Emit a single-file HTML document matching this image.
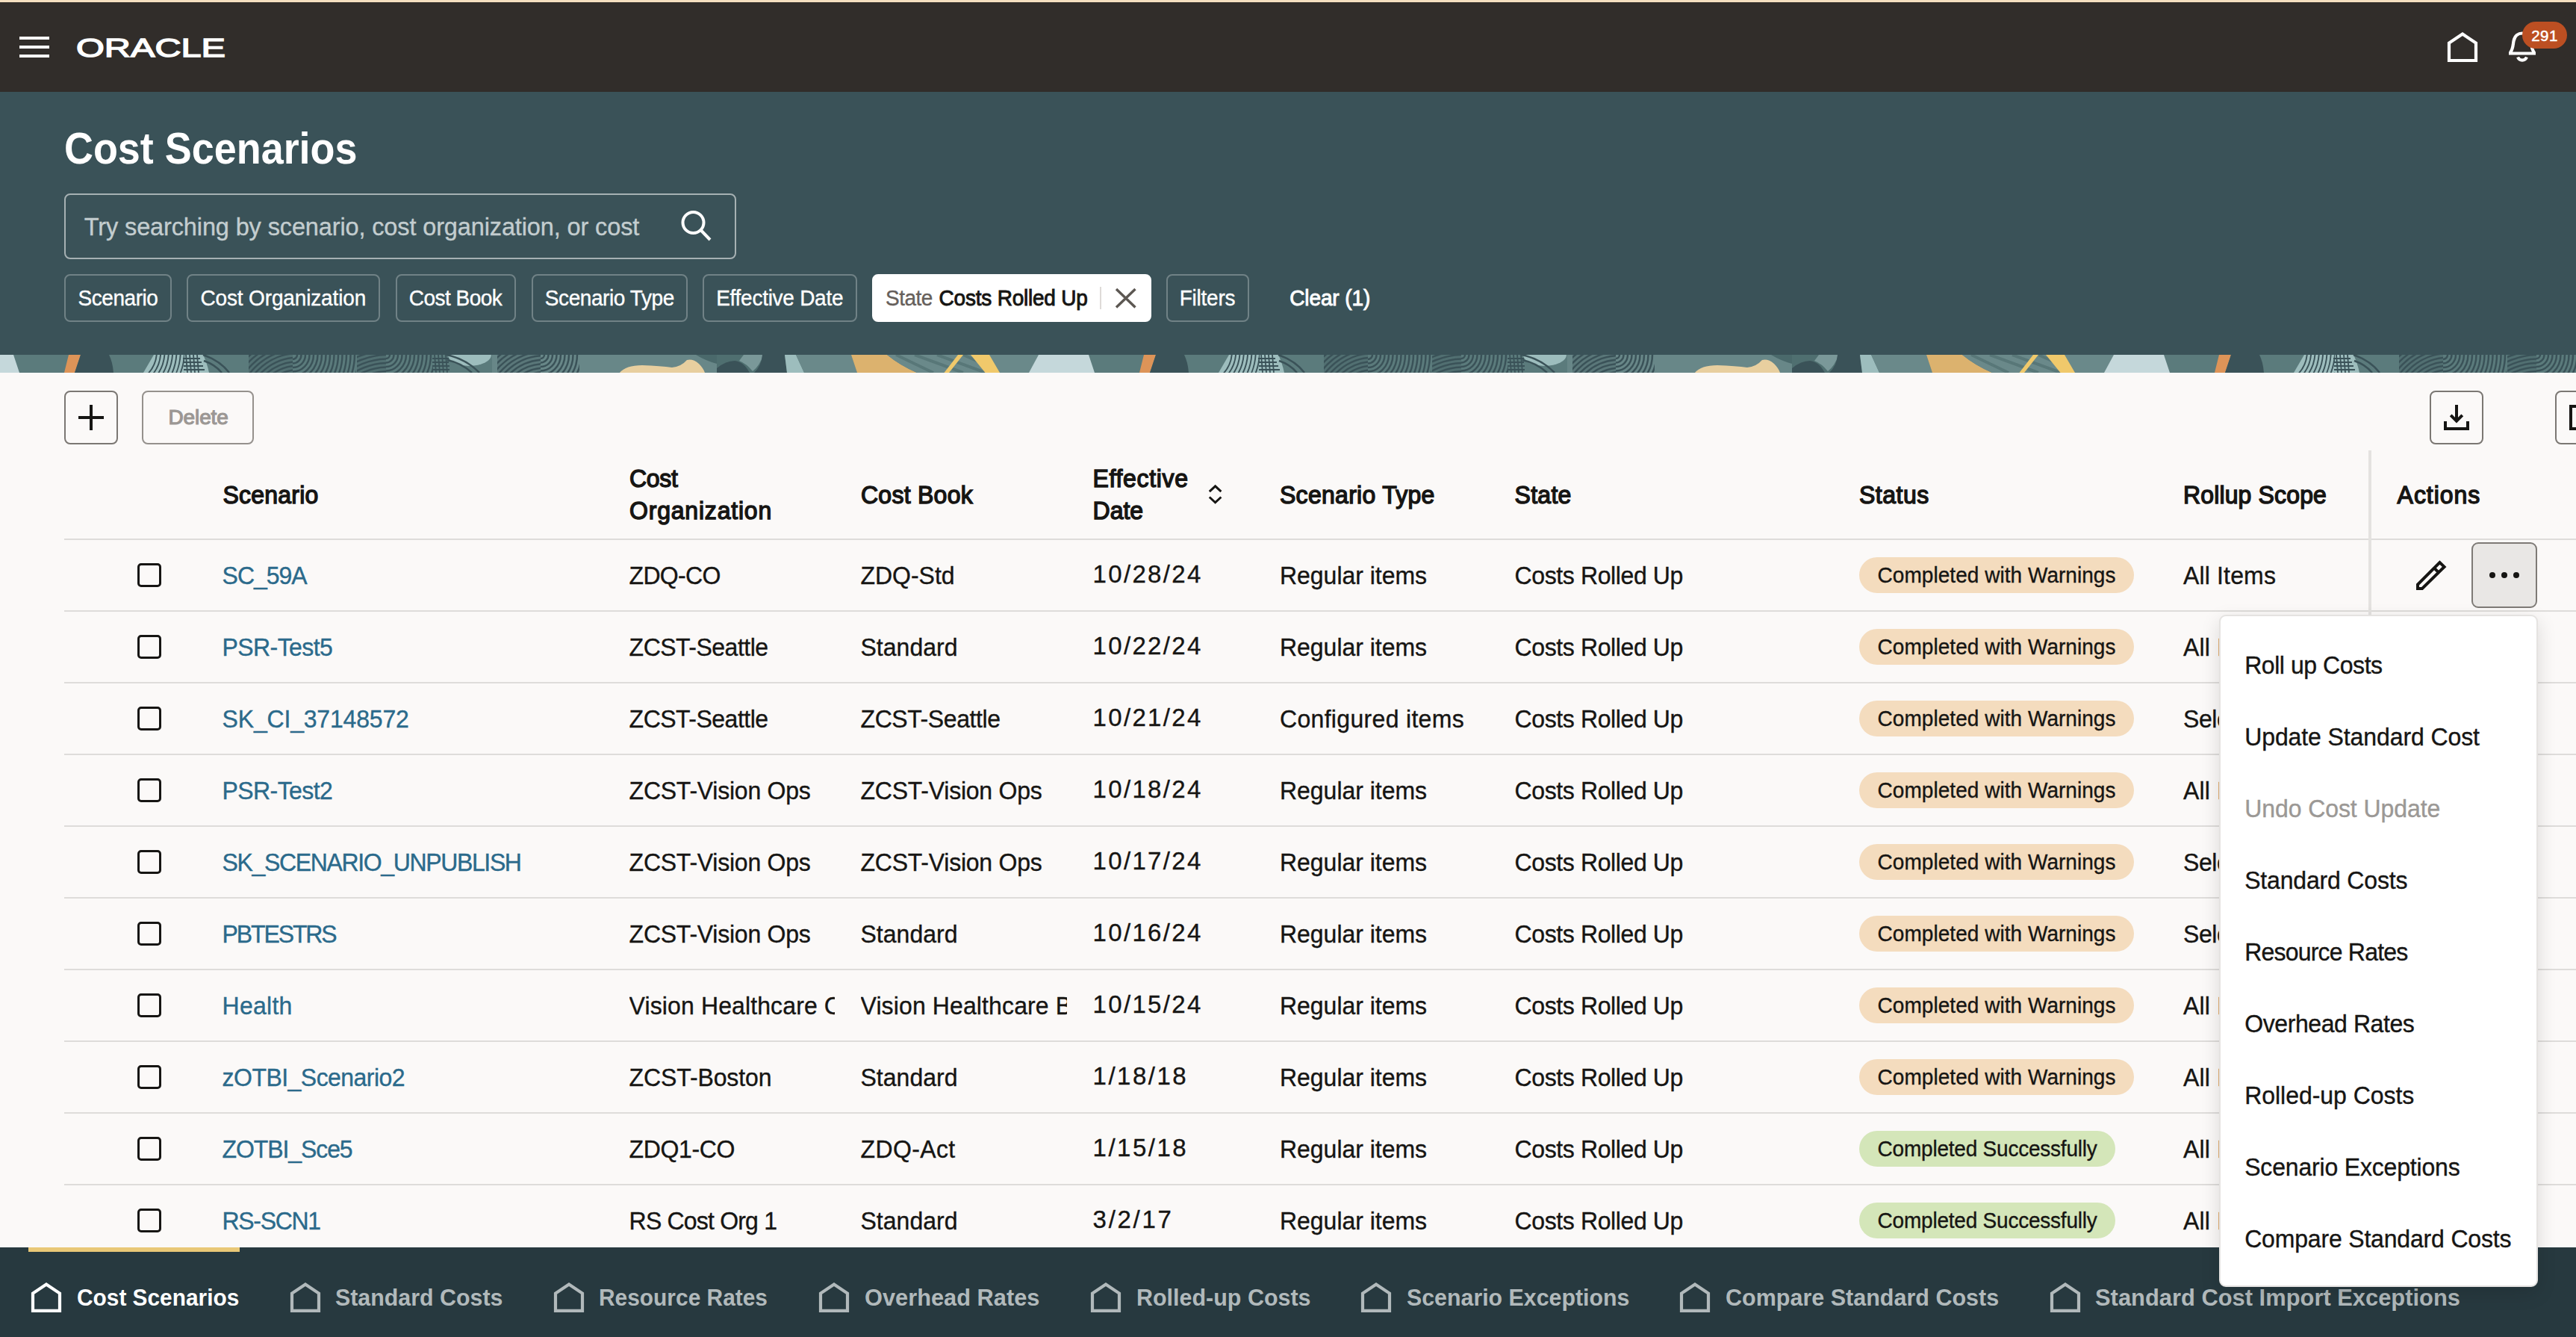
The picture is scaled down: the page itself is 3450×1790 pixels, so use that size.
<!DOCTYPE html>
<html lang="en"><head><meta charset="utf-8"><title>Cost Scenarios</title>
<style>
*{box-sizing:border-box;margin:0;padding:0}
html,body{width:3450px;height:1790px;overflow:hidden;background:#fbf9f8}
body{position:relative;font-family:"Liberation Sans",sans-serif;color:#161513;-webkit-font-smoothing:antialiased}
.abs{position:absolute}
.t{position:absolute;white-space:nowrap;line-height:1;-webkit-text-stroke:.35px currentColor}
#strip{left:0;top:0;width:3450px;height:3px;background:#f5dfc0}
#hdr{left:0;top:3px;width:3450px;height:120px;background:#312d2a}
#teal{left:0;top:123px;width:3450px;height:352px;background:#3a5258}
#pat{left:0;top:475px;width:3450px;height:24px}
.bar{position:absolute;left:26px;width:40px;height:4px;background:#fff}
#search{left:86px;top:259px;width:900px;height:88px;border:2px solid rgba(255,255,255,.55);border-radius:8px}
.chip{position:absolute;top:367px;height:64px;border:2px solid rgba(255,255,255,.28);border-radius:8px;color:#fff;font-size:28px;line-height:60px;text-align:center;white-space:nowrap}
.chip.sel{background:#fff;border-color:#fff;color:#161513;text-align:left}

a{text-decoration:none}
h1{font-weight:bold}
.btn{position:absolute;border:2px solid #7b7773;border-radius:8px}
.btn.dis{border-color:#95918d}
.ln{position:absolute;left:86px;width:3364px;height:2px;background:#dedcda}
.cb{position:absolute;left:184px;width:32px;height:32px;border:3px solid #161513;border-radius:5px}
.bdg{position:absolute;left:2490px;height:48px;border-radius:24px}
#ftr{left:0;top:1670px;width:3450px;height:120px;background:#27393f}
#menu{left:2972px;top:823px;width:427px;height:900px;background:#fff;border:2px solid #e5e3e1;border-radius:9px;box-shadow:0 8px 26px rgba(0,0,0,.13)}
</style></head>
<body>
<header>
<div id="strip" class="abs"></div>
<div id="hdr" class="abs"></div>
<div class="bar" style="top:49px"></div><div class="bar" style="top:61px"></div><div class="bar" style="top:73px"></div>
<svg class="abs" style="left:100px;top:44px" width="210" height="40" viewBox="0 0 210 40"><text x="2" y="32" font-family="Liberation Sans, sans-serif" font-size="35" fill="#fff" stroke="#fff" stroke-width="1.4" textLength="200" lengthAdjust="spacingAndGlyphs">ORACLE</text></svg>
<svg class="abs" style="left:3270px;top:36px" width="56" height="54" viewBox="0 0 56 54" fill="none" stroke="#fff" stroke-width="4.2"><path d="M10 45V21.5L28 9.5L46 21.5V45Z"/></svg>
<svg class="abs" style="left:3352px;top:36px" width="56" height="54" viewBox="0 0 56 54" fill="none" stroke="#fff" stroke-width="4.2"><path d="M8 35.5H44M10 34.5C14 29 13.5 24 14.5 19C16 11.5 21 8.5 26 8.5C31 8.5 36 11.5 37.5 19C38.5 24 38 29 42 34.5M20 40.5C22.5 46 29.5 46 32 40.5"/></svg>
<div class="abs" style="left:3378px;top:29px;width:60px;height:36px;border-radius:18px;background:#bc4f22"></div>
<div class="t" style="left:3378px;top:38px;width:60px;text-align:center;font-size:20.5px;color:#fff;letter-spacing:.5px;-webkit-text-stroke:.5px #fff">291</div>
</header>
<section aria-label="Search and filters">
<div id="teal" class="abs"></div>
<h1 class="t" style="left:86.3px;top:170.1px;font-size:59px;font-weight:bold;color:#fff;-webkit-text-stroke:0;transform:scale(0.9138,1.0000);transform-origin:0 49.94px;">Cost Scenarios</h1>
<div id="search" class="abs"></div>
<div class="t" style="left:112.8px;top:287.5px;font-size:32.5px;color:#c3cdcf;letter-spacing:-0.13px;transform:scale(1.0000,1.0200);transform-origin:0 27.51px;">Try searching by scenario, cost organization, or cost</div>
<svg class="abs" style="left:906px;top:276px" width="52" height="52" viewBox="0 0 52 52" fill="none" stroke="#fff" stroke-width="4"><circle cx="22.5" cy="22" r="14"/><path d="M32.5 32L45 45"/></svg>
<div class="chip" style="left:86px;width:144px"></div>
<div class="t" style="left:104.5px;top:385.7px;font-size:28px;color:#fff;letter-spacing:-0.44px;transform:scale(1.0000,1.0600);transform-origin:0 23.70px;">Scenario</div>
<div class="chip" style="left:250px;width:258.5px"></div>
<div class="t" style="left:268.5px;top:385.7px;font-size:28px;color:#fff;letter-spacing:-0.15px;transform:scale(1.0000,1.0600);transform-origin:0 23.70px;">Cost Organization</div>
<div class="chip" style="left:529.5px;width:161px"></div>
<div class="t" style="left:547.8px;top:385.7px;font-size:28px;color:#fff;letter-spacing:-0.52px;transform:scale(1.0000,1.0600);transform-origin:0 23.70px;">Cost Book</div>
<div class="chip" style="left:711.5px;width:209.5px"></div>
<div class="t" style="left:729.8px;top:385.7px;font-size:28px;color:#fff;letter-spacing:-0.42px;transform:scale(1.0000,1.0600);transform-origin:0 23.70px;">Scenario Type</div>
<div class="chip" style="left:941px;width:206.5px"></div>
<div class="t" style="left:959.2px;top:385.7px;font-size:28px;color:#fff;letter-spacing:-0.27px;transform:scale(1.0000,1.0600);transform-origin:0 23.70px;">Effective Date</div>
<div class="chip" style="left:1561.5px;width:111px"></div>
<div class="t" style="left:1579.7px;top:385.7px;font-size:28px;color:#fff;letter-spacing:-0.23px;transform:scale(1.0000,1.0600);transform-origin:0 23.70px;">Filters</div>
<div class="chip sel" style="left:1168px;width:373.5px"></div>
<div class="t" style="left:1186.0px;top:385.7px;font-size:28px;color:#665f5b;letter-spacing:-0.54px;transform:scale(1.0000,1.0600);transform-origin:0 23.70px;">State</div>
<div class="t" style="left:1257.6px;top:385.7px;font-size:28px;color:#161513;letter-spacing:-0.22px;transform:scale(1.0000,1.0600);transform-origin:0 23.70px;-webkit-text-stroke:0.9px currentColor;">Costs Rolled Up</div>
<div class="abs" style="left:1473px;top:384px;width:2px;height:30px;background:#dedbd8"></div>
<svg class="abs" style="left:1490px;top:382px" width="34" height="34" viewBox="0 0 34 34" fill="none" stroke="#5c5752" stroke-width="3.4"><path d="M5 5L30.5 29.5M30.5 5L5 29.5"/></svg>
<div class="t" style="left:1727.2px;top:385.7px;font-size:28px;color:#fff;letter-spacing:-0.10px;transform:scale(1.0000,1.0600);transform-origin:0 23.70px;-webkit-text-stroke:0.9px currentColor;">Clear (1)</div>
</section>
<svg id="pat" class="abs" width="3450" height="24" viewBox="0 0 3450 24">
<defs>
<clipPath id="pc1"><path d="M206 0H247V24H192Z"/></clipPath>
<clipPath id="pc3"><rect x="333" y="0" width="59" height="24"/></clipPath>
<clipPath id="pc3b"><rect x="392" y="0" width="85" height="24"/></clipPath>
<clipPath id="pc4"><rect x="478" y="0" width="39" height="24"/></clipPath>
<clipPath id="pc4b"><rect x="517" y="0" width="63" height="24"/></clipPath>
<clipPath id="pc6"><rect x="666" y="0" width="58" height="24"/></clipPath>
<clipPath id="pc6b"><rect x="724" y="0" width="52" height="24"/></clipPath>
<pattern id="pt" width="1440" height="24" patternUnits="userSpaceOnUse">
<rect width="1440" height="24" fill="#5b7b7c"/>
<path d="M0 0H18L26 24H0Z" fill="#c5d8db"/>
<path d="M92 0H108L100 24H86Z" fill="#dd9458"/>
<path d="M108 0H146Q151 10 152 24H100Z" fill="#3a5258"/>
<path d="M206 0H272Q277 10 280 24H192Z" fill="#9dbdbd"/>
<g fill="none" stroke="#3a5258" stroke-width="1.9" clip-path="url(#pc1)"><circle cx="165" cy="-5" r="45"/><circle cx="165" cy="-5" r="50.3"/><circle cx="165" cy="-5" r="55.6"/><circle cx="165" cy="-5" r="60.9"/><circle cx="165" cy="-5" r="66.2"/><circle cx="165" cy="-5" r="71.5"/><circle cx="165" cy="-5" r="76.8"/><circle cx="165" cy="-5" r="82.1"/><circle cx="165" cy="-5" r="87.4"/></g>
<g stroke="#3a5258" stroke-width="1.8" fill="none"><path d="M249 0L251 24M254 0L256 24M259 0L261 24M264 0L266 24M245 5H268M245 10H270M246 15H272M246 20H274"/></g>
<g fill="none" stroke="#3a5258" stroke-width="2.6"><path d="M272 0Q295 8 307 24M273 8Q288 13 297 24"/></g>
<g fill="none" stroke="#3a5258" stroke-width="2.5" clip-path="url(#pc3)"><circle cx="400" cy="75" r="98" fill="#3a5258" fill-opacity=".3" stroke="none"/><circle cx="400" cy="75" r="55"/><circle cx="400" cy="75" r="60.5"/><circle cx="400" cy="75" r="66"/><circle cx="400" cy="75" r="71.5"/><circle cx="400" cy="75" r="77"/><circle cx="400" cy="75" r="82.5"/><circle cx="400" cy="75" r="88"/><circle cx="400" cy="75" r="93.5"/><circle cx="400" cy="75" r="99"/></g>
<g fill="none" stroke="#3a5258" stroke-width="2.5" clip-path="url(#pc3b)"><circle cx="392" cy="0" r="6"/><circle cx="392" cy="0" r="11.5"/><circle cx="392" cy="0" r="17"/><circle cx="392" cy="0" r="22.5"/><circle cx="392" cy="0" r="28"/><circle cx="392" cy="0" r="33.5"/><circle cx="392" cy="0" r="39"/><circle cx="392" cy="0" r="44.5"/><circle cx="392" cy="0" r="50"/><circle cx="392" cy="0" r="55.5"/><circle cx="392" cy="0" r="61"/><circle cx="392" cy="0" r="66.5"/><circle cx="392" cy="0" r="72"/><circle cx="392" cy="0" r="77.5"/><circle cx="392" cy="0" r="83"/><circle cx="392" cy="0" r="88.5"/></g>
<g fill="none" stroke="#3a5258" stroke-width="2.5" clip-path="url(#pc4)"><circle cx="520" cy="100" r="108" fill="#3a5258" fill-opacity=".3" stroke="none"/><circle cx="520" cy="100" r="78"/><circle cx="520" cy="100" r="83.5"/><circle cx="520" cy="100" r="89"/><circle cx="520" cy="100" r="94.5"/><circle cx="520" cy="100" r="100"/><circle cx="520" cy="100" r="105.5"/></g>
<g fill="none" stroke="#3a5258" stroke-width="2.5" clip-path="url(#pc4b)"><circle cx="517" cy="0" r="5"/><circle cx="517" cy="0" r="10.5"/><circle cx="517" cy="0" r="16"/><circle cx="517" cy="0" r="21.5"/><circle cx="517" cy="0" r="27"/><circle cx="517" cy="0" r="32.5"/><circle cx="517" cy="0" r="38"/><circle cx="517" cy="0" r="43.5"/><circle cx="517" cy="0" r="49"/><circle cx="517" cy="0" r="54.5"/><circle cx="517" cy="0" r="60"/><circle cx="517" cy="0" r="65.5"/></g>
<g stroke="#3a5258" stroke-width="1.8" fill="none"><path d="M582 0L584 24M587 0L589 24M592 0L594 24M597 0L599 24M579 5H601M579 10H601M579 15H602M579 20H602"/></g>
<ellipse cx="629" cy="0" rx="29" ry="15" fill="#9dbdbd"/>
<g fill="none" stroke="#3a5258" stroke-width="2.6"><path d="M598 0Q625 6 642 24M599 7Q618 11 632 24"/></g>
<rect x="659" width="301" height="24" fill="#64838a" opacity="0"/>
<rect x="659" width="301" height="24" fill="#688788"/>
<g fill="none" stroke="#3a5258" stroke-width="2.5" clip-path="url(#pc6)"><circle cx="730" cy="75" r="100" fill="#3a5258" fill-opacity=".3" stroke="none"/><circle cx="730" cy="75" r="52"/><circle cx="730" cy="75" r="57.5"/><circle cx="730" cy="75" r="63"/><circle cx="730" cy="75" r="68.5"/><circle cx="730" cy="75" r="74"/><circle cx="730" cy="75" r="79.5"/><circle cx="730" cy="75" r="85"/><circle cx="730" cy="75" r="90.5"/><circle cx="730" cy="75" r="96"/><circle cx="730" cy="75" r="101.5"/><circle cx="730" cy="75" r="107"/></g>
<g fill="none" stroke="#3a5258" stroke-width="2.5" clip-path="url(#pc6b)"><circle cx="724" cy="0" r="5"/><circle cx="724" cy="0" r="10.5"/><circle cx="724" cy="0" r="16"/><circle cx="724" cy="0" r="21.5"/><circle cx="724" cy="0" r="27"/><circle cx="724" cy="0" r="32.5"/><circle cx="724" cy="0" r="38"/><circle cx="724" cy="0" r="43.5"/><circle cx="724" cy="0" r="49"/><circle cx="724" cy="0" r="54.5"/><circle cx="724" cy="0" r="60"/></g>
<path d="M830 24Q838 14 860 14Q885 15 900 17Q912 16 920 7Q928 5 936 12Q942 18 944 24Z" fill="#e8cf9f"/>
<path d="M932 0H960V12Q945 8 932 0Z" fill="#4a696b"/>
<rect x="960" width="62" height="24" fill="#4f6f70"/>
<path d="M960 18Q972 8 984 8Q996 9 1004 24H960Z" fill="#3a5258"/>
<path d="M996 0H1022Q1018 14 1008 22Q1000 12 990 8Z" fill="#7a9899"/>
<path d="M1021 0H1051L1054 24H1010Q1020 14 1021 0Z" fill="#3a5258"/>
<path d="M1051 0H1066L1077 24H1054Z" fill="#9dbdbd"/>
<path d="M1066 0H1140L1148 24H1077Z" fill="#6a898a"/>
<path d="M1140 0H1188Q1205 14 1228 24H1148Z" fill="#dcb26e"/>
<path d="M1188 0H1395L1380 24H1228Q1205 14 1188 0Z" fill="#6a898a"/>
<g stroke="#587778" stroke-width="4" fill="none"><path d="M1200 0L1250 24M1225 0L1290 24M1255 0L1320 24M1290 0L1330 18"/></g>
<path d="M1283 0H1290L1271 24H1264.5Z" fill="#f0c96b"/>
<path d="M1300 0H1325L1339 24H1319.5Z" fill="#f0c96b"/>
<path d="M1391 0H1440V24H1378Z" fill="#c5d8db"/>
</pattern>
</defs>
<rect width="3450" height="24" fill="url(#pt)"/></svg>
<main>
<div role="toolbar">
<div class="btn" style="left:86px;top:523px;width:72px;height:72px"></div>
<div class="abs" style="left:105px;top:557px;width:34px;height:4px;background:#161513"></div><div class="abs" style="left:120px;top:542px;width:4px;height:34px;background:#161513"></div>
<div class="btn dis" style="left:190px;top:523px;width:150px;height:72px"></div>
<div class="t" style="left:225.4px;top:544.9px;font-size:28px;color:#9b9794;letter-spacing:-0.09px;-webkit-text-stroke:1.2px currentColor;">Delete</div>
<div class="btn" style="left:3254px;top:523px;width:72px;height:72px"></div>
<svg class="abs" style="left:3264px;top:533px" width="52" height="52" viewBox="0 0 52 52" fill="none" stroke="#161513" stroke-width="4"><path d="M26 9V31M18.2 22.8L26 30.6L33.8 22.8M11 31V41H41V31"/></svg>
<div class="abs" style="left:3422px;top:523px;width:28px;height:72px;overflow:hidden"><div class="btn" style="left:0;top:0;width:72px;height:72px"></div><div class="abs" style="left:19px;top:19px;width:30px;height:34px;border:4px solid #161513"></div></div>
</div>
<div role="table" aria-label="Cost Scenarios">
<div role="rowgroup">
<div role="row">
<div class="t" style="left:298.5px;top:646.7px;font-size:32px;color:#161513;letter-spacing:0.21px;transform:scale(1.0000,1.0400);transform-origin:0 27.09px;-webkit-text-stroke:1.4px currentColor;">Scenario</div>
<div class="t" style="left:843.0px;top:625.3px;font-size:32px;color:#161513;letter-spacing:-0.32px;transform:scale(1.0000,1.0400);transform-origin:0 27.09px;-webkit-text-stroke:1.4px currentColor;">Cost</div>
<div class="t" style="left:843.0px;top:667.9px;font-size:32px;color:#161513;letter-spacing:0.80px;transform:scale(1.0000,1.0400);transform-origin:0 27.09px;-webkit-text-stroke:1.4px currentColor;">Organization</div>
<div class="t" style="left:1153.0px;top:646.7px;font-size:32px;color:#161513;letter-spacing:0.26px;transform:scale(1.0000,1.0400);transform-origin:0 27.09px;-webkit-text-stroke:1.4px currentColor;">Cost Book</div>
<div class="t" style="left:1463.6px;top:625.3px;font-size:32px;color:#161513;letter-spacing:0.65px;transform:scale(1.0000,1.0400);transform-origin:0 27.09px;-webkit-text-stroke:1.4px currentColor;">Effective</div>
<div class="t" style="left:1463.6px;top:667.9px;font-size:32px;color:#161513;letter-spacing:-0.02px;transform:scale(1.0000,1.0400);transform-origin:0 27.09px;-webkit-text-stroke:1.4px currentColor;">Date</div>
<svg class="abs" style="left:1612px;top:644px" width="32" height="36" viewBox="0 0 32 36" fill="none" stroke="#161513" stroke-width="3"><path d="M7.8 14.2L15.6 6.9L23.4 14.2M7.8 21.5L15.6 28.8L23.4 21.5"/></svg>
<div class="t" style="left:1714.0px;top:646.7px;font-size:32px;color:#161513;letter-spacing:0.28px;transform:scale(1.0000,1.0400);transform-origin:0 27.09px;-webkit-text-stroke:1.4px currentColor;">Scenario Type</div>
<div class="t" style="left:2028.6px;top:646.7px;font-size:32px;color:#161513;letter-spacing:0.26px;transform:scale(1.0000,1.0400);transform-origin:0 27.09px;-webkit-text-stroke:1.4px currentColor;">State</div>
<div class="t" style="left:2490.0px;top:646.7px;font-size:32px;color:#161513;letter-spacing:0.50px;transform:scale(1.0000,1.0400);transform-origin:0 27.09px;-webkit-text-stroke:1.4px currentColor;">Status</div>
<div class="t" style="left:2924.0px;top:646.7px;font-size:32px;color:#161513;letter-spacing:0.14px;transform:scale(1.0000,1.0400);transform-origin:0 27.09px;-webkit-text-stroke:1.4px currentColor;">Rollup Scope</div>
<div class="t" style="left:3210.6px;top:646.7px;font-size:32px;color:#161513;letter-spacing:0.94px;transform:scale(1.0000,1.0400);transform-origin:0 27.09px;-webkit-text-stroke:1.4px currentColor;">Actions</div>
</div>
</div>
<div role="rowgroup">
<div class="ln" style="top:721px"></div>
<div class="ln" style="top:817px"></div>
<div class="ln" style="top:913px"></div>
<div class="ln" style="top:1009px"></div>
<div class="ln" style="top:1105px"></div>
<div class="ln" style="top:1201px"></div>
<div class="ln" style="top:1297px"></div>
<div class="ln" style="top:1393px"></div>
<div class="ln" style="top:1489px"></div>
<div class="ln" style="top:1585px"></div>
<div class="abs" style="left:3172px;top:603px;width:4px;height:1070px;background:#e4e2e0"></div>
<div role="row">
<div class="cb" style="top:754px"></div>
<a class="t" style="left:297.6px;top:754.9px;font-size:32px;color:#2b6a8b;letter-spacing:-1.03px;transform:scale(1.0000,1.0550);transform-origin:0 27.09px;">SC_59A</a>
<div class="t" style="left:842.6px;top:754.9px;font-size:32px;color:#161513;letter-spacing:-0.70px;transform:scale(1.0000,1.0550);transform-origin:0 27.09px;">ZDQ-CO</div>
<div class="t" style="left:1152.5px;top:754.9px;font-size:32px;color:#161513;letter-spacing:-0.03px;transform:scale(1.0000,1.0550);transform-origin:0 27.09px;">ZDQ-Std</div>
<div class="t" style="left:1463.6px;top:752.3px;font-size:33px;color:#161513;letter-spacing:2.32px;">10/28/24</div>
<div class="t" style="left:1714.0px;top:754.9px;font-size:32px;color:#161513;letter-spacing:-0.03px;transform:scale(1.0000,1.0550);transform-origin:0 27.09px;">Regular items</div>
<div class="t" style="left:2028.6px;top:754.9px;font-size:32px;color:#161513;letter-spacing:-0.39px;transform:scale(1.0000,1.0550);transform-origin:0 27.09px;">Costs Rolled Up</div>
<div class="bdg" style="top:746px;width:368px;background:#f4dcbe"></div>
<div class="t" style="left:2514.6px;top:756.8px;font-size:28px;color:#161513;letter-spacing:0.04px;transform:scale(1.0000,1.0850);transform-origin:0 23.70px;">Completed with Warnings</div>
<div class="t" style="left:2924.0px;top:754.9px;font-size:32px;color:#161513;letter-spacing:0.15px;transform:scale(1.0000,1.0550);transform-origin:0 27.09px;">All Items</div>
</div>
<div role="row">
<div class="cb" style="top:850px"></div>
<a class="t" style="left:297.6px;top:850.9px;font-size:32px;color:#2b6a8b;letter-spacing:-0.60px;transform:scale(1.0000,1.0550);transform-origin:0 27.09px;">PSR-Test5</a>
<div class="t" style="left:842.6px;top:850.9px;font-size:32px;color:#161513;letter-spacing:-0.51px;transform:scale(1.0000,1.0550);transform-origin:0 27.09px;">ZCST-Seattle</div>
<div class="t" style="left:1152.5px;top:850.9px;font-size:32px;color:#161513;letter-spacing:0.02px;transform:scale(1.0000,1.0550);transform-origin:0 27.09px;">Standard</div>
<div class="t" style="left:1463.6px;top:848.3px;font-size:33px;color:#161513;letter-spacing:2.32px;">10/22/24</div>
<div class="t" style="left:1714.0px;top:850.9px;font-size:32px;color:#161513;letter-spacing:-0.03px;transform:scale(1.0000,1.0550);transform-origin:0 27.09px;">Regular items</div>
<div class="t" style="left:2028.6px;top:850.9px;font-size:32px;color:#161513;letter-spacing:-0.39px;transform:scale(1.0000,1.0550);transform-origin:0 27.09px;">Costs Rolled Up</div>
<div class="bdg" style="top:842px;width:368px;background:#f4dcbe"></div>
<div class="t" style="left:2514.6px;top:852.8px;font-size:28px;color:#161513;letter-spacing:0.04px;transform:scale(1.0000,1.0850);transform-origin:0 23.70px;">Completed with Warnings</div>
<div class="t" style="left:2924.0px;top:850.9px;font-size:32px;color:#161513;letter-spacing:0.15px;transform:scale(1.0000,1.0550);transform-origin:0 27.09px;">All Items</div>
</div>
<div role="row">
<div class="cb" style="top:946px"></div>
<a class="t" style="left:297.6px;top:946.9px;font-size:32px;color:#2b6a8b;letter-spacing:-0.19px;transform:scale(1.0000,1.0550);transform-origin:0 27.09px;">SK_CI_37148572</a>
<div class="t" style="left:842.6px;top:946.9px;font-size:32px;color:#161513;letter-spacing:-0.51px;transform:scale(1.0000,1.0550);transform-origin:0 27.09px;">ZCST-Seattle</div>
<div class="t" style="left:1152.5px;top:946.9px;font-size:32px;color:#161513;letter-spacing:-0.42px;transform:scale(1.0000,1.0550);transform-origin:0 27.09px;">ZCST-Seattle</div>
<div class="t" style="left:1463.6px;top:944.3px;font-size:33px;color:#161513;letter-spacing:2.32px;">10/21/24</div>
<div class="t" style="left:1714.0px;top:946.9px;font-size:32px;color:#161513;letter-spacing:0.32px;transform:scale(1.0000,1.0550);transform-origin:0 27.09px;">Configured items</div>
<div class="t" style="left:2028.6px;top:946.9px;font-size:32px;color:#161513;letter-spacing:-0.39px;transform:scale(1.0000,1.0550);transform-origin:0 27.09px;">Costs Rolled Up</div>
<div class="bdg" style="top:938px;width:368px;background:#f4dcbe"></div>
<div class="t" style="left:2514.6px;top:948.8px;font-size:28px;color:#161513;letter-spacing:0.04px;transform:scale(1.0000,1.0850);transform-origin:0 23.70px;">Completed with Warnings</div>
<div class="t" style="left:2924.0px;top:946.9px;font-size:32px;color:#161513;transform:scale(1.0000,1.0550);transform-origin:0 27.09px;letter-spacing:-0.4px;">Selected Items</div>
</div>
<div role="row">
<div class="cb" style="top:1042px"></div>
<a class="t" style="left:297.6px;top:1042.9px;font-size:32px;color:#2b6a8b;letter-spacing:-0.60px;transform:scale(1.0000,1.0550);transform-origin:0 27.09px;">PSR-Test2</a>
<div class="t" style="left:842.6px;top:1042.9px;font-size:32px;color:#161513;letter-spacing:-0.24px;transform:scale(1.0000,1.0550);transform-origin:0 27.09px;">ZCST-Vision Ops</div>
<div class="t" style="left:1152.5px;top:1042.9px;font-size:32px;color:#161513;letter-spacing:-0.24px;transform:scale(1.0000,1.0550);transform-origin:0 27.09px;">ZCST-Vision Ops</div>
<div class="t" style="left:1463.6px;top:1040.3px;font-size:33px;color:#161513;letter-spacing:2.32px;">10/18/24</div>
<div class="t" style="left:1714.0px;top:1042.9px;font-size:32px;color:#161513;letter-spacing:-0.03px;transform:scale(1.0000,1.0550);transform-origin:0 27.09px;">Regular items</div>
<div class="t" style="left:2028.6px;top:1042.9px;font-size:32px;color:#161513;letter-spacing:-0.39px;transform:scale(1.0000,1.0550);transform-origin:0 27.09px;">Costs Rolled Up</div>
<div class="bdg" style="top:1034px;width:368px;background:#f4dcbe"></div>
<div class="t" style="left:2514.6px;top:1044.8px;font-size:28px;color:#161513;letter-spacing:0.04px;transform:scale(1.0000,1.0850);transform-origin:0 23.70px;">Completed with Warnings</div>
<div class="t" style="left:2924.0px;top:1042.9px;font-size:32px;color:#161513;letter-spacing:0.15px;transform:scale(1.0000,1.0550);transform-origin:0 27.09px;">All Items</div>
</div>
<div role="row">
<div class="cb" style="top:1138px"></div>
<a class="t" style="left:297.6px;top:1138.9px;font-size:32px;color:#2b6a8b;letter-spacing:-1.36px;transform:scale(1.0000,1.0550);transform-origin:0 27.09px;">SK_SCENARIO_UNPUBLISH</a>
<div class="t" style="left:842.6px;top:1138.9px;font-size:32px;color:#161513;letter-spacing:-0.24px;transform:scale(1.0000,1.0550);transform-origin:0 27.09px;">ZCST-Vision Ops</div>
<div class="t" style="left:1152.5px;top:1138.9px;font-size:32px;color:#161513;letter-spacing:-0.24px;transform:scale(1.0000,1.0550);transform-origin:0 27.09px;">ZCST-Vision Ops</div>
<div class="t" style="left:1463.6px;top:1136.3px;font-size:33px;color:#161513;letter-spacing:2.32px;">10/17/24</div>
<div class="t" style="left:1714.0px;top:1138.9px;font-size:32px;color:#161513;letter-spacing:-0.03px;transform:scale(1.0000,1.0550);transform-origin:0 27.09px;">Regular items</div>
<div class="t" style="left:2028.6px;top:1138.9px;font-size:32px;color:#161513;letter-spacing:-0.39px;transform:scale(1.0000,1.0550);transform-origin:0 27.09px;">Costs Rolled Up</div>
<div class="bdg" style="top:1130px;width:368px;background:#f4dcbe"></div>
<div class="t" style="left:2514.6px;top:1140.8px;font-size:28px;color:#161513;letter-spacing:0.04px;transform:scale(1.0000,1.0850);transform-origin:0 23.70px;">Completed with Warnings</div>
<div class="t" style="left:2924.0px;top:1138.9px;font-size:32px;color:#161513;transform:scale(1.0000,1.0550);transform-origin:0 27.09px;letter-spacing:-0.4px;">Selected Items</div>
</div>
<div role="row">
<div class="cb" style="top:1234px"></div>
<a class="t" style="left:297.6px;top:1234.9px;font-size:32px;color:#2b6a8b;letter-spacing:-2.12px;transform:scale(1.0000,1.0550);transform-origin:0 27.09px;">PBTESTRS</a>
<div class="t" style="left:842.6px;top:1234.9px;font-size:32px;color:#161513;letter-spacing:-0.24px;transform:scale(1.0000,1.0550);transform-origin:0 27.09px;">ZCST-Vision Ops</div>
<div class="t" style="left:1152.5px;top:1234.9px;font-size:32px;color:#161513;letter-spacing:0.02px;transform:scale(1.0000,1.0550);transform-origin:0 27.09px;">Standard</div>
<div class="t" style="left:1463.6px;top:1232.3px;font-size:33px;color:#161513;letter-spacing:2.32px;">10/16/24</div>
<div class="t" style="left:1714.0px;top:1234.9px;font-size:32px;color:#161513;letter-spacing:-0.03px;transform:scale(1.0000,1.0550);transform-origin:0 27.09px;">Regular items</div>
<div class="t" style="left:2028.6px;top:1234.9px;font-size:32px;color:#161513;letter-spacing:-0.39px;transform:scale(1.0000,1.0550);transform-origin:0 27.09px;">Costs Rolled Up</div>
<div class="bdg" style="top:1226px;width:368px;background:#f4dcbe"></div>
<div class="t" style="left:2514.6px;top:1236.8px;font-size:28px;color:#161513;letter-spacing:0.04px;transform:scale(1.0000,1.0850);transform-origin:0 23.70px;">Completed with Warnings</div>
<div class="t" style="left:2924.0px;top:1234.9px;font-size:32px;color:#161513;transform:scale(1.0000,1.0550);transform-origin:0 27.09px;letter-spacing:-0.4px;">Selected Items</div>
</div>
<div role="row">
<div class="cb" style="top:1330px"></div>
<a class="t" style="left:297.6px;top:1330.9px;font-size:32px;color:#2b6a8b;letter-spacing:0.25px;transform:scale(1.0000,1.0550);transform-origin:0 27.09px;">Health</a>
<div class="t" style="left:842.6px;top:1330.9px;font-size:32px;color:#161513;transform:scale(1.0000,1.0550);transform-origin:0 27.09px;width:275px;overflow:hidden;height:44px;letter-spacing:0.12px;">Vision Healthcare Cost Org</div>
<div class="t" style="left:1152.5px;top:1330.9px;font-size:32px;color:#161513;transform:scale(1.0000,1.0550);transform-origin:0 27.09px;width:276px;overflow:hidden;height:44px;letter-spacing:0.12px;">Vision Healthcare Book</div>
<div class="t" style="left:1463.6px;top:1328.3px;font-size:33px;color:#161513;letter-spacing:2.32px;">10/15/24</div>
<div class="t" style="left:1714.0px;top:1330.9px;font-size:32px;color:#161513;letter-spacing:-0.03px;transform:scale(1.0000,1.0550);transform-origin:0 27.09px;">Regular items</div>
<div class="t" style="left:2028.6px;top:1330.9px;font-size:32px;color:#161513;letter-spacing:-0.39px;transform:scale(1.0000,1.0550);transform-origin:0 27.09px;">Costs Rolled Up</div>
<div class="bdg" style="top:1322px;width:368px;background:#f4dcbe"></div>
<div class="t" style="left:2514.6px;top:1332.8px;font-size:28px;color:#161513;letter-spacing:0.04px;transform:scale(1.0000,1.0850);transform-origin:0 23.70px;">Completed with Warnings</div>
<div class="t" style="left:2924.0px;top:1330.9px;font-size:32px;color:#161513;letter-spacing:0.15px;transform:scale(1.0000,1.0550);transform-origin:0 27.09px;">All Items</div>
</div>
<div role="row">
<div class="cb" style="top:1426px"></div>
<a class="t" style="left:297.6px;top:1426.9px;font-size:32px;color:#2b6a8b;letter-spacing:-0.54px;transform:scale(1.0000,1.0550);transform-origin:0 27.09px;">zOTBI_Scenario2</a>
<div class="t" style="left:842.6px;top:1426.9px;font-size:32px;color:#161513;letter-spacing:-0.12px;transform:scale(1.0000,1.0550);transform-origin:0 27.09px;">ZCST-Boston</div>
<div class="t" style="left:1152.5px;top:1426.9px;font-size:32px;color:#161513;letter-spacing:0.02px;transform:scale(1.0000,1.0550);transform-origin:0 27.09px;">Standard</div>
<div class="t" style="left:1463.6px;top:1424.3px;font-size:33px;color:#161513;letter-spacing:2.48px;">1/18/18</div>
<div class="t" style="left:1714.0px;top:1426.9px;font-size:32px;color:#161513;letter-spacing:-0.03px;transform:scale(1.0000,1.0550);transform-origin:0 27.09px;">Regular items</div>
<div class="t" style="left:2028.6px;top:1426.9px;font-size:32px;color:#161513;letter-spacing:-0.39px;transform:scale(1.0000,1.0550);transform-origin:0 27.09px;">Costs Rolled Up</div>
<div class="bdg" style="top:1418px;width:368px;background:#f4dcbe"></div>
<div class="t" style="left:2514.6px;top:1428.8px;font-size:28px;color:#161513;letter-spacing:0.04px;transform:scale(1.0000,1.0850);transform-origin:0 23.70px;">Completed with Warnings</div>
<div class="t" style="left:2924.0px;top:1426.9px;font-size:32px;color:#161513;letter-spacing:0.15px;transform:scale(1.0000,1.0550);transform-origin:0 27.09px;">All Items</div>
</div>
<div role="row">
<div class="cb" style="top:1522px"></div>
<a class="t" style="left:297.6px;top:1522.9px;font-size:32px;color:#2b6a8b;letter-spacing:-1.10px;transform:scale(1.0000,1.0550);transform-origin:0 27.09px;">ZOTBI_Sce5</a>
<div class="t" style="left:842.6px;top:1522.9px;font-size:32px;color:#161513;letter-spacing:-0.37px;transform:scale(1.0000,1.0550);transform-origin:0 27.09px;">ZDQ1-CO</div>
<div class="t" style="left:1152.5px;top:1522.9px;font-size:32px;color:#161513;letter-spacing:0.37px;transform:scale(1.0000,1.0550);transform-origin:0 27.09px;">ZDQ-Act</div>
<div class="t" style="left:1463.6px;top:1520.3px;font-size:33px;color:#161513;letter-spacing:2.48px;">1/15/18</div>
<div class="t" style="left:1714.0px;top:1522.9px;font-size:32px;color:#161513;letter-spacing:-0.03px;transform:scale(1.0000,1.0550);transform-origin:0 27.09px;">Regular items</div>
<div class="t" style="left:2028.6px;top:1522.9px;font-size:32px;color:#161513;letter-spacing:-0.39px;transform:scale(1.0000,1.0550);transform-origin:0 27.09px;">Costs Rolled Up</div>
<div class="bdg" style="top:1514px;width:343px;background:#d4e6b9"></div>
<div class="t" style="left:2514.6px;top:1524.8px;font-size:28px;color:#161513;letter-spacing:-0.22px;transform:scale(1.0000,1.0850);transform-origin:0 23.70px;">Completed Successfully</div>
<div class="t" style="left:2924.0px;top:1522.9px;font-size:32px;color:#161513;letter-spacing:0.15px;transform:scale(1.0000,1.0550);transform-origin:0 27.09px;">All Items</div>
</div>
<div role="row">
<div class="cb" style="top:1618px"></div>
<a class="t" style="left:297.6px;top:1618.9px;font-size:32px;color:#2b6a8b;letter-spacing:-1.35px;transform:scale(1.0000,1.0550);transform-origin:0 27.09px;">RS-SCN1</a>
<div class="t" style="left:842.6px;top:1618.9px;font-size:32px;color:#161513;letter-spacing:-0.81px;transform:scale(1.0000,1.0550);transform-origin:0 27.09px;">RS Cost Org 1</div>
<div class="t" style="left:1152.5px;top:1618.9px;font-size:32px;color:#161513;letter-spacing:0.02px;transform:scale(1.0000,1.0550);transform-origin:0 27.09px;">Standard</div>
<div class="t" style="left:1463.6px;top:1616.3px;font-size:33px;color:#161513;letter-spacing:2.71px;">3/2/17</div>
<div class="t" style="left:1714.0px;top:1618.9px;font-size:32px;color:#161513;letter-spacing:-0.03px;transform:scale(1.0000,1.0550);transform-origin:0 27.09px;">Regular items</div>
<div class="t" style="left:2028.6px;top:1618.9px;font-size:32px;color:#161513;letter-spacing:-0.39px;transform:scale(1.0000,1.0550);transform-origin:0 27.09px;">Costs Rolled Up</div>
<div class="bdg" style="top:1610px;width:343px;background:#d4e6b9"></div>
<div class="t" style="left:2514.6px;top:1620.8px;font-size:28px;color:#161513;letter-spacing:-0.22px;transform:scale(1.0000,1.0850);transform-origin:0 23.70px;">Completed Successfully</div>
<div class="t" style="left:2924.0px;top:1618.9px;font-size:32px;color:#161513;letter-spacing:0.15px;transform:scale(1.0000,1.0550);transform-origin:0 27.09px;">All Items</div>
</div>
<svg class="abs" style="left:3226px;top:740px" width="60" height="60" viewBox="0 0 60 60" fill="none" stroke="#161513" stroke-width="4" stroke-linejoin="miter"><path d="M12 48V42.5L41.5 13L47.6 18.9L18 48ZM34.2 20.6L40 26.4"/></svg>
<div class="abs" style="left:3310px;top:726px;width:88px;height:88px;border:2px solid #7e7a76;border-radius:9px;background:#e9e7e5"></div>
<div class="abs" style="left:3333.8px;top:765.8px;width:8.4px;height:8.4px;border-radius:50%;background:#161513"></div>
<div class="abs" style="left:3349.8px;top:765.8px;width:8.4px;height:8.4px;border-radius:50%;background:#161513"></div>
<div class="abs" style="left:3365.8px;top:765.8px;width:8.4px;height:8.4px;border-radius:50%;background:#161513"></div>
</div>
</div>
</main>
<nav aria-label="Pages">
<div id="ftr" class="abs"></div>
<div class="abs" style="left:38px;top:1670px;width:283px;height:6px;background:#e9c877"></div>
<svg class="abs" style="left:36px;top:1711px" width="52" height="52" viewBox="0 0 52 52" fill="none" stroke="#fff" stroke-width="4.2"><path d="M8 43.8V20.5L26 8.5L44 20.5V43.8Z"/></svg>
<div class="t" style="left:102.7px;top:1720.7px;font-size:32px;font-weight:bold;color:#fff;-webkit-text-stroke:0;transform:scale(0.9327,1.0000);transform-origin:0 27.09px;">Cost Scenarios</div>
<svg class="abs" style="left:382.6px;top:1711px" width="52" height="52" viewBox="0 0 52 52" fill="none" stroke="#b1b9bb" stroke-width="4.2"><path d="M8 43.8V20.5L26 8.5L44 20.5V43.8Z"/></svg>
<div class="t" style="left:449.0px;top:1720.7px;font-size:32px;font-weight:bold;color:#b1b9bb;-webkit-text-stroke:0;transform:scale(0.9489,1.0000);transform-origin:0 27.09px;">Standard Costs</div>
<svg class="abs" style="left:736px;top:1711px" width="52" height="52" viewBox="0 0 52 52" fill="none" stroke="#b1b9bb" stroke-width="4.2"><path d="M8 43.8V20.5L26 8.5L44 20.5V43.8Z"/></svg>
<div class="t" style="left:802.0px;top:1720.7px;font-size:32px;font-weight:bold;color:#b1b9bb;-webkit-text-stroke:0;transform:scale(0.9343,1.0000);transform-origin:0 27.09px;">Resource Rates</div>
<svg class="abs" style="left:1091px;top:1711px" width="52" height="52" viewBox="0 0 52 52" fill="none" stroke="#b1b9bb" stroke-width="4.2"><path d="M8 43.8V20.5L26 8.5L44 20.5V43.8Z"/></svg>
<div class="t" style="left:1157.6px;top:1720.7px;font-size:32px;font-weight:bold;color:#b1b9bb;-webkit-text-stroke:0;transform:scale(0.9619,1.0000);transform-origin:0 27.09px;">Overhead Rates</div>
<svg class="abs" style="left:1454.5px;top:1711px" width="52" height="52" viewBox="0 0 52 52" fill="none" stroke="#b1b9bb" stroke-width="4.2"><path d="M8 43.8V20.5L26 8.5L44 20.5V43.8Z"/></svg>
<div class="t" style="left:1521.5px;top:1720.7px;font-size:32px;font-weight:bold;color:#b1b9bb;-webkit-text-stroke:0;transform:scale(0.9518,1.0000);transform-origin:0 27.09px;">Rolled-up Costs</div>
<svg class="abs" style="left:1817px;top:1711px" width="52" height="52" viewBox="0 0 52 52" fill="none" stroke="#b1b9bb" stroke-width="4.2"><path d="M8 43.8V20.5L26 8.5L44 20.5V43.8Z"/></svg>
<div class="t" style="left:1883.6px;top:1720.7px;font-size:32px;font-weight:bold;color:#b1b9bb;-webkit-text-stroke:0;transform:scale(0.9480,1.0000);transform-origin:0 27.09px;">Scenario Exceptions</div>
<svg class="abs" style="left:2244px;top:1711px" width="52" height="52" viewBox="0 0 52 52" fill="none" stroke="#b1b9bb" stroke-width="4.2"><path d="M8 43.8V20.5L26 8.5L44 20.5V43.8Z"/></svg>
<div class="t" style="left:2310.8px;top:1720.7px;font-size:32px;font-weight:bold;color:#b1b9bb;-webkit-text-stroke:0;transform:scale(0.9535,1.0000);transform-origin:0 27.09px;">Compare Standard Costs</div>
<svg class="abs" style="left:2740px;top:1711px" width="52" height="52" viewBox="0 0 52 52" fill="none" stroke="#b1b9bb" stroke-width="4.2"><path d="M8 43.8V20.5L26 8.5L44 20.5V43.8Z"/></svg>
<div class="t" style="left:2806.0px;top:1720.7px;font-size:32px;font-weight:bold;color:#b1b9bb;-webkit-text-stroke:0;transform:scale(0.9650,1.0000);transform-origin:0 27.09px;">Standard Cost Import Exceptions</div>
</nav>
<div role="menu">
<div id="menu" class="abs"></div>
<div class="t" style="left:3006.2px;top:874.7px;font-size:32px;color:#161513;letter-spacing:-0.45px;transform:scale(1.0000,1.0550);transform-origin:0 27.09px;">Roll up Costs</div>
<div class="t" style="left:3006.2px;top:970.7px;font-size:32px;color:#161513;letter-spacing:-0.10px;transform:scale(1.0000,1.0550);transform-origin:0 27.09px;">Update Standard Cost</div>
<div class="t" style="left:3006.2px;top:1066.7px;font-size:32px;color:#9b9895;letter-spacing:-0.08px;transform:scale(1.0000,1.0550);transform-origin:0 27.09px;">Undo Cost Update</div>
<div class="t" style="left:3006.2px;top:1162.7px;font-size:32px;color:#161513;letter-spacing:-0.18px;transform:scale(1.0000,1.0550);transform-origin:0 27.09px;">Standard Costs</div>
<div class="t" style="left:3006.2px;top:1258.7px;font-size:32px;color:#161513;letter-spacing:-0.80px;transform:scale(1.0000,1.0550);transform-origin:0 27.09px;">Resource Rates</div>
<div class="t" style="left:3006.2px;top:1354.7px;font-size:32px;color:#161513;letter-spacing:-0.41px;transform:scale(1.0000,1.0550);transform-origin:0 27.09px;">Overhead Rates</div>
<div class="t" style="left:3006.2px;top:1450.7px;font-size:32px;color:#161513;letter-spacing:-0.04px;transform:scale(1.0000,1.0550);transform-origin:0 27.09px;">Rolled-up Costs</div>
<div class="t" style="left:3006.2px;top:1546.7px;font-size:32px;color:#161513;letter-spacing:-0.18px;transform:scale(1.0000,1.0550);transform-origin:0 27.09px;">Scenario Exceptions</div>
<div class="t" style="left:3006.2px;top:1642.7px;font-size:32px;color:#161513;letter-spacing:-0.18px;transform:scale(1.0000,1.0550);transform-origin:0 27.09px;">Compare Standard Costs</div>
</div>
</body></html>
